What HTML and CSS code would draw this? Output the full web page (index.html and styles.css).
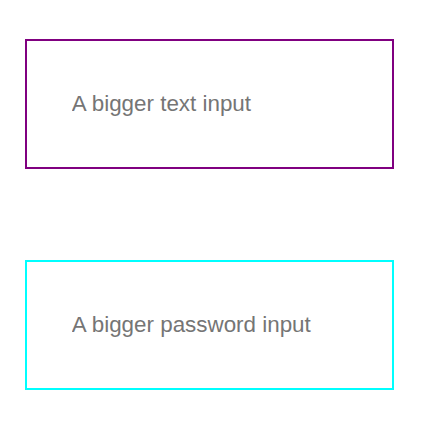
FILE: index.html
```html
<!DOCTYPE html>
<html lang="en">
<head>
  <meta charset="UTF-8">
  <meta name="viewport" content="width=device-width, initial-scale=1.0">
  <title>Bigger Inputs</title>
  <link rel="stylesheet" href="styles.css">
</head>
<body>
  <div class="form">
    <input type="text" class="big-input text-input" placeholder="A bigger text input" autocomplete="off" />
    <input type="password" class="big-input password-input" placeholder="A bigger password input" autocomplete="off" />
  </div>
</body>
</html>
```

FILE: styles.css
```css
html {
  font-family: "Liberation Sans", Arial, sans-serif;
}

body {
  margin: 8px;
}

.form {
  display: flex;
  flex-direction: column;
  align-items: flex-start;
  gap: 91px;
  padding: 31px 17px;
}

.big-input {
  box-sizing: border-box;
  width: 369px;
  height: 130px;
  margin: 0;
  padding: 0 2em;
  font-family: "Liberation Sans", Arial, sans-serif;
  font-size: 1.4em;
  color: #333;
  background: white;
  outline: none;
  border-radius: 0;
}
.big-input::placeholder {
  color: #757575;
}

.text-input {
  border: 2px solid purple;
}

.password-input {
  border: 2px solid cyan;
}
```
